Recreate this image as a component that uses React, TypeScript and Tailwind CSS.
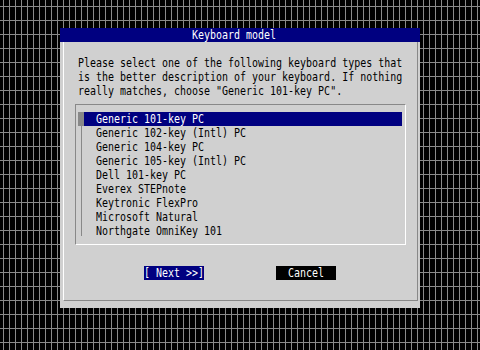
const items = [
  "Generic 101-key PC",
  "Generic 102-key (Intl) PC",
  "Generic 104-key PC",
  "Generic 105-key (Intl) PC",
  "Dell 101-key PC",
  "Everex STEPnote",
  "Keytronic FlexPro",
  "Microsoft Natural",
  "Northgate OmniKey 101",
];

// narrow the glyphs to the 6px text-mode cell
function T({ children }: { children: React.ReactNode }) {
  return <span className="inline-block origin-left scale-x-[0.767]">{children}</span>;
}

export default function App() {
  return (
    <main
      className={
        "w-[480px] h-[350px] overflow-hidden bg-black pt-[28px] pl-[60px] font-['DejaVu_Sans_Mono',monospace] text-[13px] leading-[14px] whitespace-pre " +
        "bg-[image:linear-gradient(to_right,transparent_3px,#8a8a8a_3px,#8a8a8a_4px,transparent_4px),linear-gradient(to_bottom,transparent_6px,#8a8a8a_6px,#8a8a8a_7px,transparent_7px)] bg-[size:6px_14px]"
      }
    >
      <div className="w-[360px] h-[280px] bg-[#d0d0d0] flex flex-col">
        <div className="h-[14px] bg-[#000080] text-white pl-[132px]"><T>Keyboard model</T></div>
        <div className="ml-[3px] mr-[2px] h-[259px] border-l border-l-white border-r border-r-[#888] border-b border-b-[#888] flex flex-col text-black">
          <div className="pt-[14px] pl-[14px]">
            <p className="h-[14px]"><T>Please select one of the following keyboard types that</T></p>
            <p className="h-[14px]"><T>is the better description of your keyboard. If nothing</T></p>
            <p className="h-[14px]"><T>really matches, choose "Generic 101-key PC".</T></p>
          </div>
          <div className="mt-[6px] ml-[11px] w-[331px] h-[141px] border-t border-l border-[#888] border-r-white border-b-white border-r border-b flex pt-[7px] pl-[2px]">
            <div className="w-[6px] flex flex-col">
              <div className="h-[14px] bg-[#888]" />
              <div className="h-[110px] w-px ml-[3px] bg-[#888]" />
            </div>
            <ul className="w-[318px]">
              {items.map((item, i) => (
                <li key={item} className={"h-[14px] pl-[12px] " + (i === 0 ? "bg-[#000080] text-white" : "")}>
                  <T>{item}</T>
                </li>
              ))}
            </ul>
          </div>
          <div className="mt-[21px] ml-[80px] flex">
            <button className="w-[60px] h-[14px] bg-[#000080] text-white text-left leading-[14px]"><T>[ Next &gt;&gt;]</T></button>
            <button className="ml-[72px] w-[60px] h-[14px] bg-black text-white text-left leading-[14px]"><T>  Cancel  </T></button>
          </div>
        </div>
      </div>
    </main>
  );
}
